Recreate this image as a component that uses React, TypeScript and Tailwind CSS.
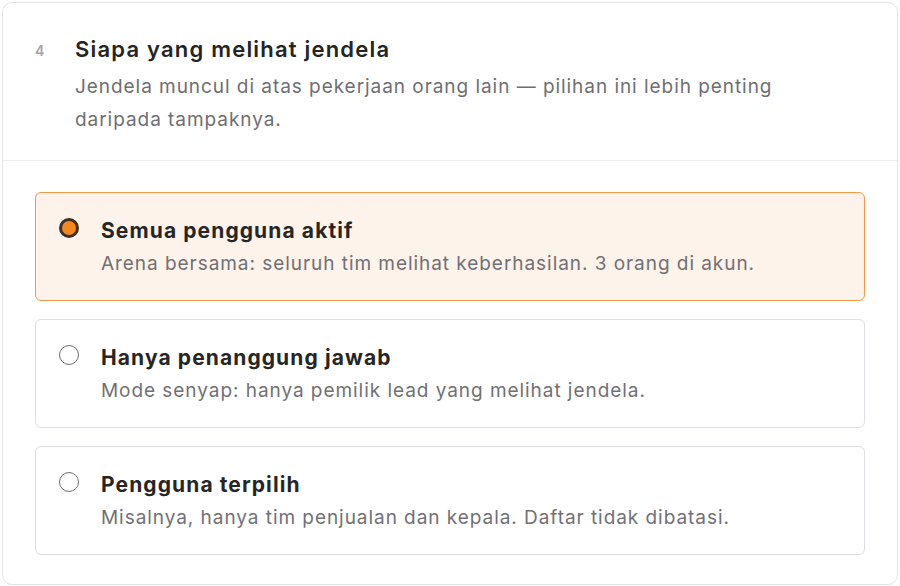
const options = [
  {
    id: "all",
    title: "Semua pengguna aktif",
    desc: "Arena bersama: seluruh tim melihat keberhasilan. 3 orang di akun.",
  },
  {
    id: "owner",
    title: "Hanya penanggung jawab",
    desc: "Mode senyap: hanya pemilik lead yang melihat jendela.",
  },
  {
    id: "picked",
    title: "Pengguna terpilih",
    desc: "Misalnya, hanya tim penjualan dan kepala. Daftar tidak dibatasi.",
  },
];

export default function App() {
  const selected = "all";

  return (
    <div className="min-h-[586px] bg-white p-[2px] font-['Inter','Noto_Sans',sans-serif]">
      <div className="rounded-[10px] border border-[#e3e3e6] bg-white h-[583px]">
        <div className="flex gap-[30px] px-[32px] pt-[31px] pb-[24px] border-b border-[#ececee]">
          <span className="text-[14px] font-semibold text-[#a3a3a8] pt-[6px] w-[10px]">4</span>
          <div>
            <h2 className="text-[22px] leading-[30px] font-semibold tracking-[1.2px] text-[#242424]">
              Siapa yang melihat jendela
            </h2>
            <p className="mt-[6px] text-[19px] leading-[33px] tracking-[0.95px] text-[#6e6e73] max-w-[730px]">
              Jendela muncul di atas pekerjaan orang lain — pilihan ini lebih penting daripada tampaknya.
            </p>
          </div>
        </div>

        <div className="flex flex-col gap-[18px] px-[32px] pt-[31px]">
          {options.map((o) => {
            const on = o.id === selected;
            return (
              <label
                key={o.id}
                className={
                  on
                    ? "flex items-start gap-[22px] rounded-[6px] border border-[#f29a4a] bg-[#fdf3ea] pl-[23px] pr-[24px] pt-[24px] pb-[22px]"
                    : "flex items-start gap-[22px] rounded-[6px] border border-[#dedee2] bg-white pl-[23px] pr-[24px] pt-[24px] pb-[22px]"
                }
              >
                {on ? (
                  <span className="mt-[1px] w-[20px] h-[20px] shrink-0 rounded-full border-[3px] border-[#3d3026] bg-[#f5871f]" />
                ) : (
                  <span className="mt-[1px] w-[20px] h-[20px] shrink-0 rounded-full border-[1.5px] border-[#6d6d70] bg-white" />
                )}
                <div>
                  <div className="text-[21px] leading-[28px] font-bold tracking-[1.1px] text-[#262626]">{o.title}</div>
                  <div className="mt-[5px] text-[19px] leading-[28px] tracking-[0.95px] text-[#707075]">{o.desc}</div>
                </div>
              </label>
            );
          })}
        </div>
      </div>
    </div>
  );
}
